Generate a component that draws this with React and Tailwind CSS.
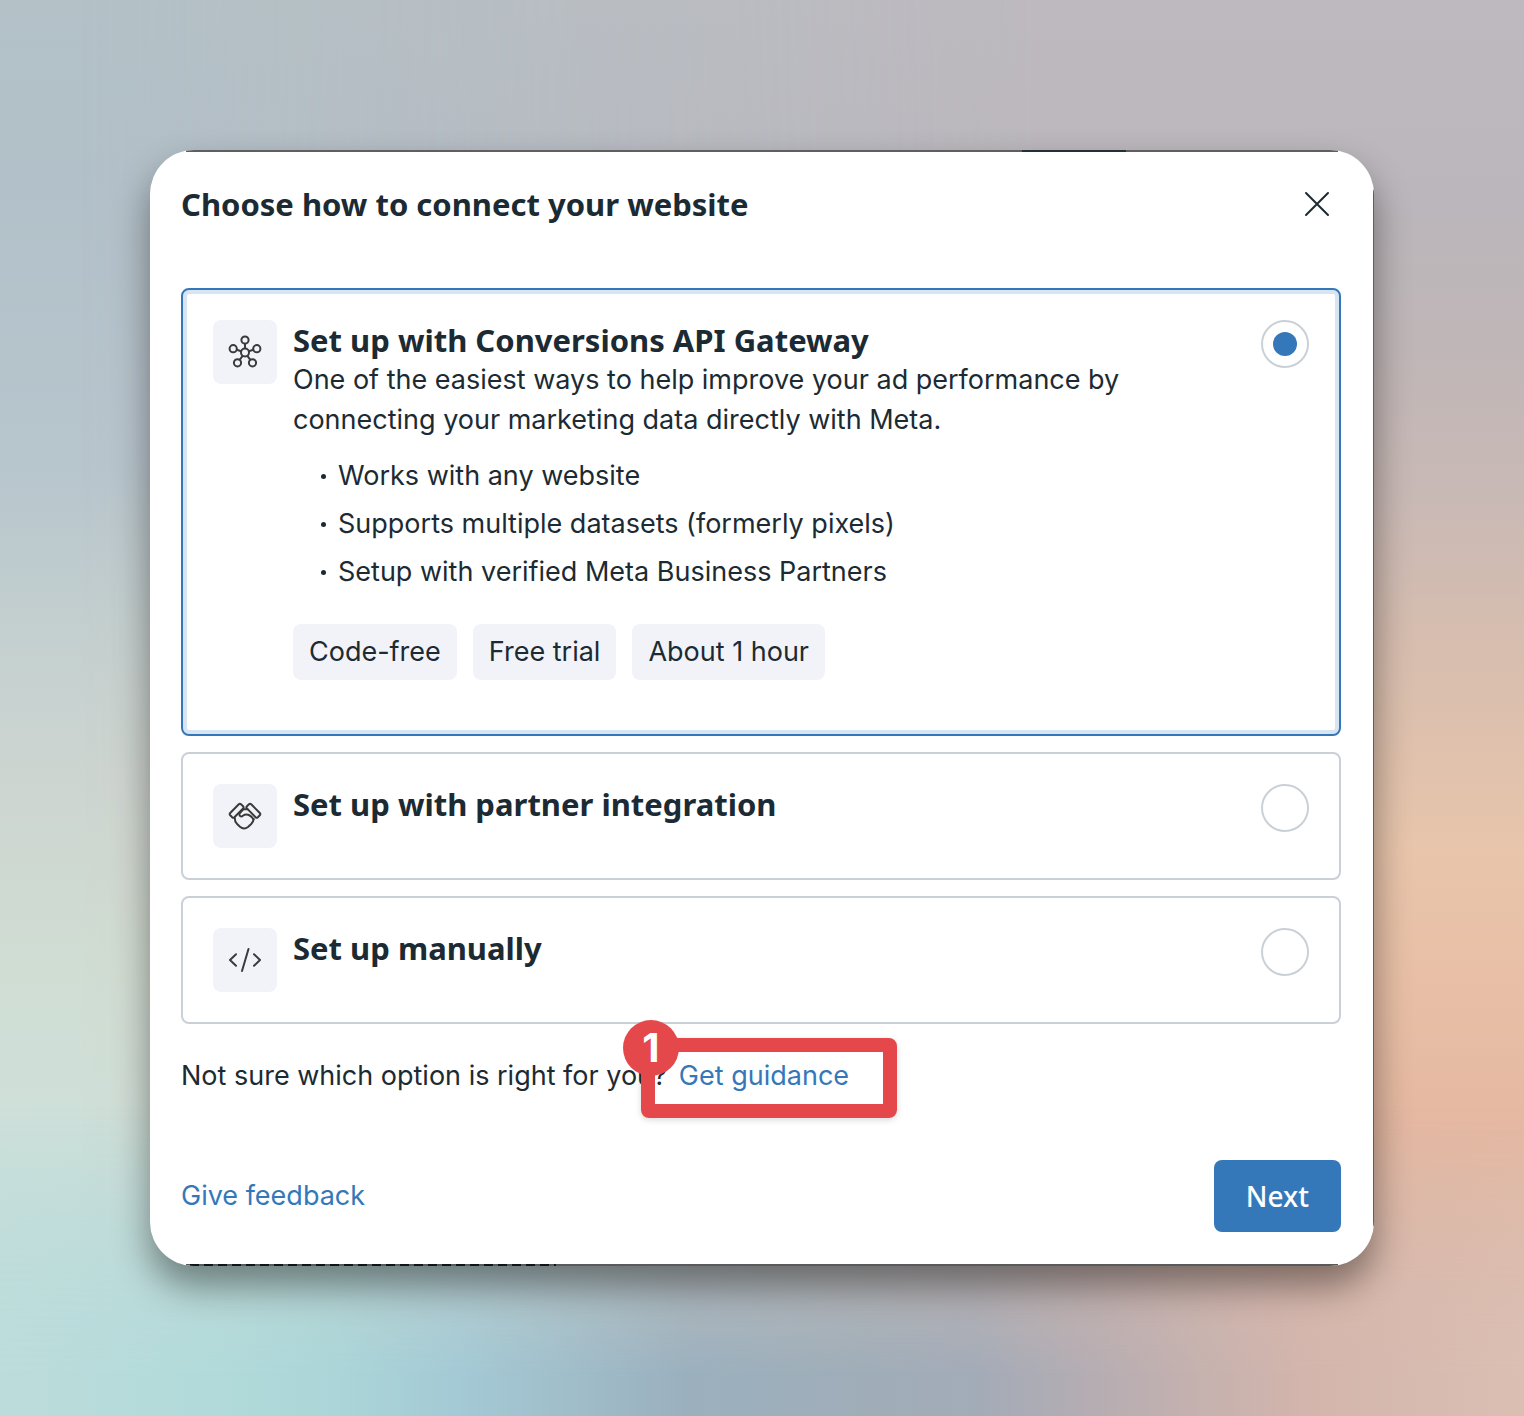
import React, { useState } from 'react';

const NetworkIcon = () => (
  <svg width="34" height="34" viewBox="0 0 34 34" fill="none" stroke="#3a3a3a" strokeWidth="2" aria-hidden="true">
    <circle cx="17" cy="17.5" r="4" />
    <circle cx="17" cy="5" r="3.6" />
    <circle cx="5.2" cy="13.7" r="3.6" />
    <circle cx="28.8" cy="13.7" r="3.6" />
    <circle cx="9.5" cy="27.8" r="3.6" />
    <circle cx="24.5" cy="27.8" r="3.6" />
    <path d="M17 8.6v4.9M8.7 14.8l4.5 1.5M25.3 14.8l-4.5 1.5M11.7 24.8l2.9-4M22.3 24.8l-2.9-4" />
  </svg>
);

const HandshakeIcon = () => (
  <svg width="34" height="34" viewBox="0 0 34 34" fill="none" stroke="#3a3a3a" strokeWidth="2" strokeLinecap="round" strokeLinejoin="round" aria-hidden="true">
    <path d="M10.8 5.2 2.2 14a1.6 1.6 0 0 0 0 2.2l2 2a1.6 1.6 0 0 0 2.2 0l8.700-8.800a1.6 1.6 0 0 0 0-2.200l-2.100-2a1.6 1.6 0 0 0-2.200 0Z" />
    <path d="m23.2 5.2 8.600 8.800a1.6 1.6 0 0 1 0 2.200l-2 2a1.6 1.6 0 0 1-2.200 0L18.900 9.400a1.6 1.6 0 0 1 0-2.200l2.100-2a1.6 1.6 0 0 1 2.200 0Z" />
    <path d="M15 10.200h4.500M6.700 18.700c0 3 .8 4.800 2.400 6.300l2.900 2.800c2.600 2.100 5.400 2.100 8 .2l3.200-3c1.500-1.500 2.300-2.800 2.400-5" />
    <path d="m15.500 10.200-3.600 4c-1.500 2 .2 3.700 2.200 3 1.300-.5 1.900-1.700 4-1.700 3.200 0 5.400 1.700 7.500 5" />
  </svg>
);

const CodeIcon = () => (
  <svg width="34" height="34" viewBox="0 0 34 34" fill="none" stroke="#3a3a3a" strokeWidth="2" strokeLinecap="round" strokeLinejoin="round" aria-hidden="true">
    <path d="M8 11.200 2 17l6 5.800M26 11.200l6 5.800-6 5.800M20.500 6l-6.500 22" />
  </svg>
);

const options = [
  {
    id: 'gateway',
    title: 'Set up with Conversions API Gateway',
    icon: NetworkIcon,
    description:
      'One of the easiest ways to help improve your ad performance by connecting your marketing data directly with Meta.',
    points: [
      'Works with any website',
      'Supports multiple datasets (formerly pixels)',
      'Setup with verified Meta Business Partners',
    ],
    tags: ['Code-free', 'Free trial', 'About 1 hour'],
  },
  { id: 'partner', title: 'Set up with partner integration', icon: HandshakeIcon },
  { id: 'manual', title: 'Set up manually', icon: CodeIcon },
];

// Soft colour wash behind the dialog: left edge, right edge, then bottom edge
const Backdrop = () => (
  <div className="absolute inset-0 -z-10 bg-[linear-gradient(to_bottom,#b3c2c7_0%,#b2c0c9_12%,#b7c5cd_33%,#c4d0cf_45%,#cdd5d1_55%,#d0ddd3_68%,#cfe0d9_78%,#c3dddb_90%,#bcdedb_100%)]">
    <div className="absolute inset-0 bg-[linear-gradient(to_bottom,#bdb9be_0%,#bbb6bb_15%,#c0b6b7_25%,#c9b9b5_35%,#d6bdaf_45%,#e8c5ab_60%,#e8bfa6_70%,#e5b8a1_80%,#dcb9a8_90%,#dbbfb3_100%)] [mask-image:linear-gradient(to_right,transparent_5%,black_68%)]" />
    <div className="absolute inset-0 bg-[linear-gradient(to_right,#bcdcdb_0%,#b2dada_14%,#abd5d8_22%,#a4cad5_30%,#9bb0be_45%,#9fadb8_57%,#a3abb8_64%,#b6adb2_72%,#c8b2ae_80%,#d3b5ac_86%,#dbbfb3_100%)] [mask-image:linear-gradient(to_bottom,transparent_78%,black_97%)]" />
  </div>
);

const OptionCard = ({ option, selected, onSelect }) => {
  const Icon = option.icon;

  return (
    <div
      className={`flex items-start gap-4 rounded-lg border-2 p-[30px] ${
        selected ? 'border-[#3578b9] shadow-[inset_0_0_0_4px_#d7e5f3]' : 'border-[#cbd0d8]'
      }`}
    >
      <div className="flex size-16 shrink-0 items-center justify-center rounded-lg bg-[#f2f3f8]">
        <Icon />
      </div>

      <div className="min-w-0 flex-1">
        <label htmlFor={option.id} className="block font-['Noto_Sans'] text-[31px] leading-10 font-bold">
          {option.title}
        </label>

        {/* Details of the chosen option */}
        {selected && option.description && (
          <div className="mb-6">
            <p className="max-w-[860px]">{option.description}</p>
            <ul className="mt-4 flex flex-col gap-2 pl-7">
              {option.points.map((point) => (
                <li key={point} className="flex items-center gap-3">
                  <span className="size-[5px] rounded-full bg-[#1c2b33]" />
                  {point}
                </li>
              ))}
            </ul>
            <div className="mt-8 flex gap-4">
              {option.tags.map((tag) => (
                <span key={tag} className="flex h-14 items-center rounded-lg bg-[#f2f3f8] px-4">
                  {tag}
                </span>
              ))}
            </div>
          </div>
        )}
      </div>

      <input
        type="radio"
        id={option.id}
        name="setup"
        checked={selected}
        onChange={onSelect}
        className="grid size-12 shrink-0 appearance-none place-items-center rounded-full border-2 border-[#cbd0d8] bg-white before:size-6 before:rounded-full before:content-[''] checked:before:bg-[#3578b9]"
      />
    </div>
  );
};

const App = () => {
  const [selected, setSelected] = useState('gateway');

  return (
    <main className="relative isolate min-h-screen p-[150px] font-['Inter'] text-[27px] leading-10 text-[#1c2b33]">
      <Backdrop />
      <section className="relative rounded-[44px] bg-white pt-[30px] pr-[33px] pb-[34px] pl-[31px] shadow-[0_20px_36px_rgba(0,0,0,0.42)]">
        <div className="pointer-events-none absolute inset-0 overflow-hidden rounded-[44px]">
          <span className="absolute inset-x-9 top-0 h-0.5 bg-[#5f5f62]" />
          <span className="absolute top-0 right-[248px] h-0.5 w-26 bg-[#22303a]" />
          <span className="absolute inset-x-9 bottom-0 h-0.5 bg-[#5a5a5d]" />
          <span className="absolute bottom-0 left-10 h-0.5 w-[366px] bg-[repeating-linear-gradient(to_right,#10151a_0_9px,#5a5a5d_9px_14px)]" />
          <span className="absolute inset-y-10 right-0 w-px bg-[#5f5f62]" />
        </div>

        {/* Header */}
        <header className="mb-15 flex h-12 items-center justify-between">
          <h1 className="font-['Noto_Sans'] text-[31px] font-bold">Choose how to connect your website</h1>
          <button aria-label="Close" className="flex size-12 items-center justify-center">
            <svg width="26" height="26" viewBox="0 0 26 26" stroke="#1c2b33" strokeWidth="2" strokeLinecap="round">
              <path d="M2 2l22 22M24 2 2 24" />
            </svg>
          </button>
        </header>

        {/* Options */}
        <div className="flex flex-col gap-4">
          {options.map((option) => (
            <OptionCard
              key={option.id}
              option={option}
              selected={selected === option.id}
              onSelect={() => setSelected(option.id)}
            />
          ))}
        </div>

        {/* Guidance */}
        <p className="mt-8 flex gap-3">
          Not sure which option is right for you?
          <span className="relative">
            <a href="#guidance" className="text-[#3578b9]">Get guidance</a>
            <span className="pointer-events-none absolute -top-[18px] -right-12 -bottom-[22px] -left-[38px] rounded-lg border-14 border-[#e5484b] shadow-[0_2px_6px_rgba(0,0,0,0.15)]" />
            <span className="absolute -top-9 -left-14 flex size-14 items-center justify-center rounded-full bg-[#e5484b] text-[40px] font-bold text-white">
              1
            </span>
          </span>
        </p>

        {/* Footer */}
        <footer className="mt-16 flex items-center justify-between">
          <a href="#feedback" className="text-[#3578b9]">Give feedback</a>
          <button className="h-18 rounded-lg bg-[#3578b9] px-8 font-['Noto_Sans'] text-[28px] font-medium text-white">Next</button>
        </footer>
      </section>
    </main>
  );
};

export default App;
